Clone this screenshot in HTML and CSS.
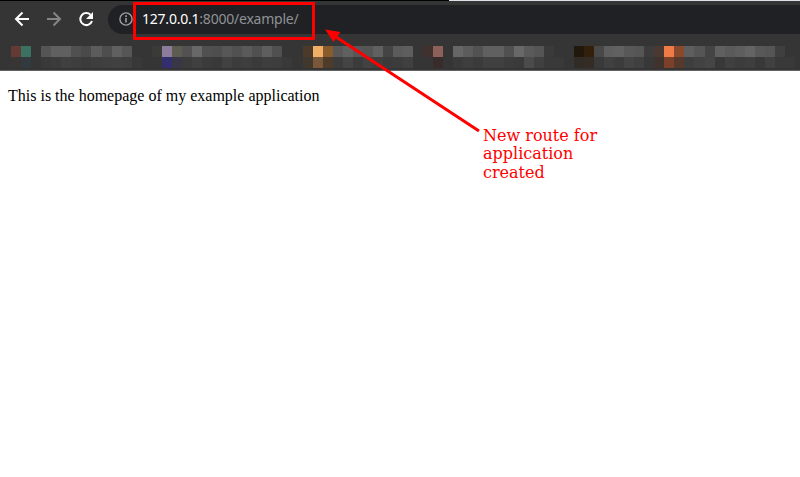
FILE: index.html
```html
<!DOCTYPE html>
<html lang="en">
<head>
<meta charset="utf-8">
<title>Example application</title>
<link rel="stylesheet" href="styles.css">
</head>
<body>
<header class="browser">
  <div class="tabline"></div>
  <div class="toolbar">
    <svg class="nav" viewBox="0 0 110 35" fill="none" stroke="#fff" stroke-width="2">
      <path d="M29 14H16.500M22.500 7.500 16 14l6.500 6.500"/>
      <path stroke="#858585" d="M47 14h12.500M53.500 7.500 60 14l-6.500 6.500"/>
      <path d="M90.500 9.800A6 6 0 1 0 92 16"/>
      <path fill="#fff" stroke="none" d="M93 7v7h-7z"/>
    </svg>
    <div class="address">
      <svg class="info" viewBox="0 0 14 14" fill="none" stroke="#9aa0a6"><circle cx="7" cy="7" r="6.100" stroke-width="1.400"/><path stroke-width="1.600" d="M7 6v4.500M7 3.300v1.600"/></svg>
      <span class="url"><b>127.0.0.1</b>:8000/example/</span>
    </div>
  </div>
  <svg class="bookmarks" id="bookmarks" viewBox="0 0 79 2" preserveAspectRatio="none" shape-rendering="crispEdges"></svg>
</header>
<main>This is the homepage of my example application</main>
<div class="highlight"></div>
<svg class="arrow" viewBox="0 0 800 477"><path d="M336 37 479 131" stroke="red" stroke-width="3"/><path d="M325 29.500 340.500 32 336.500 37.500 333.500 42z" fill="red"/></svg>
<p class="note">New route for<br>application<br>created</p>
<script src="bookmarks.js"></script>
</body>
</html>
```

FILE: styles.css
```css
body { margin: 0; background: #fff; height: 477px; overflow: hidden; }
.browser { height: 71px; box-sizing: border-box; background: #353535; border-bottom: 1px solid #626262; }
.tabline { height: 1px; background: linear-gradient(90deg, #000 449px, #dee1e6 449px); }
.toolbar { height: 35px; display: flex; align-items: flex-start; padding-top: 4px; box-sizing: border-box; }
.nav { width: 110px; height: 35px; flex: none; margin-right: -2px; }
.address { flex: 1; height: 29px; box-sizing: border-box; background: #202124; border-radius: 15px 0 0 15px; display: flex; align-items: center; padding-left: 11px; }
.info { width: 14px; height: 14px; margin: 0 9px 1px 0; }
.url { font: 14px/20px "Noto Sans", sans-serif; color: #8f9296; white-space: nowrap; letter-spacing: -0.22px; padding-bottom: 1px; }
.url b { font-weight: 400; color: #fff; }
.bookmarks { display: block; width: 794px; height: 22px; margin: 10px 0 0 1.200px; }
main { padding: 16px 8px; font: 16px/18px "Liberation Serif", serif; color: #000; }
.highlight { position: absolute; left: 133px; top: 2px; width: 182px; height: 38px; box-sizing: border-box; border: 3px solid red; }
.arrow { position: absolute; left: 0; top: 0; width: 800px; height: 477px; }
.note { position: absolute; left: 483px; top: 126.500px; margin: 0; font: 16px/18.600px "DejaVu Serif", serif; color: red; white-space: nowrap; }
```

FILE: bookmarks.js
```js
// Each row starts at column 1; "-" leaves the toolbar colour visible.
const rows = [
  "633b34 3b7160 - 555555 606060 606060 505050 4a4a4a 5c5c5c 4e4e4e 606060 565656 - - 3a3a38 8b7c9c 5c5c50 525252 686868 505050 4e4e4e 575757 515151 5a5a5a 505050 5e5e5e 505050 - - 4b3a2a f1ae66 885b2d 585858 606060 575757 555555 606060 444444 5b5b5b 5e5e5e - 40302e 8d6159 - 666666 5c5c5c 525252 606060 606060 505050 686868 5a5a5a 555555 3a3a3a - - 21170b 33200c 484846 5e5e5e 616161 585858 555555 3c3c3c 4b3830 ee7b48 8b492c 5e5e5e 555555 444444 606060 5a5a5a 5e5e5e 646464 585858 555555 3f3f3f -",
  "383632 333a3f - 393939 3b3b3b 404040 3e3e3e 3b3b3b 3e3e3e 404040 414141 3f3f3f 383838 - - 332e70 383745 3b3b3b 404040 3b3b3b 393939 414141 3c3c3c 3e3e3e 3a3a3a 3e3e3e 3d3d3d 393939 - 40372d 7a573a 4e3b29 3c3c3c 444444 3b3b3b 424242 3e3e3e 3b3b3b 3c3c3c 404040 - - 382c2b - 3a3a3a 3e3e3e 3b3b3b 404040 404040 3c3c3c 3a3a3a 4b4b4b 404040 393939 393939 - 302b24 352b25 393939 404040 3c3c3c 444444 404040 383838 40332e 7b4029 57392b 3e3e3e 424242 454545 383838 404040 3c3c3c 3e3e3e 383838 404040 393939 393939"
];
const strip = document.getElementById("bookmarks");
rows.forEach((row, y) => row.split(" ").forEach((color, i) => {
  if (color === "-") return;
  const cell = document.createElementNS("http://www.w3.org/2000/svg", "rect");
  cell.setAttribute("x", i + 1);
  cell.setAttribute("y", y);
  cell.setAttribute("width", 1);
  cell.setAttribute("height", 1);
  cell.setAttribute("fill", "#" + color);
  strip.append(cell);
}));
```
